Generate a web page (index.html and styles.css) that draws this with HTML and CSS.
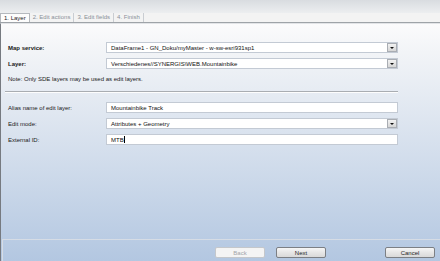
FILE: index.html
```html
<!DOCTYPE html>
<html lang="en">

<head>
    <meta charset="UTF-8">
    <title>Edit layer wizard</title>
    <link rel="stylesheet" href="styles.css">
</head>

<body>

    <div class="window">
        <div class="titlebar"></div>

        <div class="tabs">
            <div class="tab active">1. Layer</div>
            <div class="tab">2. Edit actions</div>
            <div class="tab">3. Edit fields</div>
            <div class="tab">4. Finish</div>
        </div>

        <div class="panel">
            <div class="form">
                <div class="row">
                    <div class="label bold">Map service:</div>
                    <div class="field combo">
                        <span class="value">DataFrame1 - GN_Doku/myMaster - w-sw-esri931sp1</span>
                        <span class="drop"></span>
                    </div>
                </div>
                <div class="row">
                    <div class="label bold">Layer:</div>
                    <div class="field combo">
                        <span class="value">Verschiedenes//SYNERGIS\WEB.Mountainbike</span>
                        <span class="drop"></span>
                    </div>
                </div>

                <div class="note">Note: Only SDE layers may be used as edit layers.</div>

                <div class="separator"></div>

                <div class="row">
                    <div class="label">Alias name of edit layer:</div>
                    <div class="field">
                        <span class="value">Mountainbike Track</span>
                    </div>
                </div>
                <div class="row">
                    <div class="label">Edit mode:</div>
                    <div class="field combo">
                        <span class="value">Attributes + Geometry</span>
                        <span class="drop"></span>
                    </div>
                </div>
                <div class="row">
                    <div class="label">External ID:</div>
                    <div class="field">
                        <span class="value">MTB</span><span class="caret"></span>
                    </div>
                </div>
            </div>

            <div class="buttons">
                <button class="btn" disabled>Back</button>
                <button class="btn next">Next</button>
                <button class="btn">Cancel</button>
            </div>
        </div>
    </div>

</body>

</html>
```

FILE: styles.css
```css
body {
    margin: 0;
    padding: 0;
    font-family: "Liberation Sans", Arial, sans-serif;
    font-size: 6px;
    color: #1a1a1a;
    background-color: #f0f0f0;
}

.window {
    width: 440px;
    height: 261px;
    display: flex;
    flex-direction: column;
    overflow: hidden;
}

.titlebar {
    height: 13px;
    background: linear-gradient(#d9dce0, #eceef0);
}

.tabs {
    display: flex;
    height: 9px;
    background-color: #f3f3f3;
    border-bottom: 1px solid #9ea3a8;
}

.tab {
    padding: 0 3px;
    line-height: 9px;
    color: #8a9098;
    border-right: 1px solid #c9cdd2;
    white-space: nowrap;
}

.tab.active {
    color: #1e2226;
    background-color: #fdfdfd;
    border: 1px solid #b4b8bd;
    border-bottom: none;
    line-height: 8px;
}

.panel {
    flex: 1;
    display: flex;
    flex-direction: column;
    border-top: 1px solid #e2e4e7;
    border-left: 1px solid #767a80;
    background: linear-gradient(#fbfbfc, #f2f4f7 12%, #b3c7e1);
}

.form {
    flex: 1;
    padding: 18px 0 0 7px;
}

.row {
    display: flex;
    align-items: center;
    height: 11px;
    margin-bottom: 5px;
}

.label {
    width: 98px;
    white-space: nowrap;
}

.bold {
    font-weight: bold;
}

.field {
    width: 292px;
    height: 11px;
    box-sizing: border-box;
    display: flex;
    align-items: center;
    padding-left: 4px;
    background-color: #fff;
    border: 1px solid #c3cad4;
    color: #111;
}

.value {
    white-space: nowrap;
}

.combo .value {
    flex: 1;
}

.drop {
    width: 10px;
    height: 9px;
    box-sizing: border-box;
    border: 1px solid #a9adb3;
    background: linear-gradient(#f2f2f2, #d6d6d6);
    display: flex;
    justify-content: center;
    align-items: center;
}

.drop::after {
    content: "";
    border-left: 2px solid transparent;
    border-right: 2px solid transparent;
    border-top: 2px solid #111;
}

.caret {
    width: 1px;
    height: 7px;
    background-color: #000;
}

.note {
    margin-top: 2px;
    height: 11px;
    line-height: 11px;
}

.separator {
    margin: 6px 0 9px -3px;
    width: 393px;
    height: 1px;
    background-color: #a9adb2;
    border-bottom: 1px solid #fdfdfd;
}

.buttons {
    height: 22px;
    box-sizing: border-box;
    margin-left: 1px;
    border-top: 1px solid #d6dce5;
    border-left: 1px solid #d6dce5;
    display: flex;
    justify-content: flex-end;
    align-items: flex-start;
    padding: 7px 5px 0 0;
}

.btn {
    width: 50px;
    height: 11px;
    padding: 0;
    font-family: "Liberation Sans", Arial, sans-serif;
    font-size: 6px;
    color: #1e1e1e;
    border: 1px solid #7c7f84;
    border-radius: 2px;
    background: linear-gradient(#f6f6f6, #e6e6e6 50%, #d9d9d9);
    margin-left: 11px;
}

.btn:disabled {
    color: #a2a4a8;
    border-color: #c4c7cb;
    background: #f4f4f4;
}

.btn.next {
    margin-right: 48px;
}
```
